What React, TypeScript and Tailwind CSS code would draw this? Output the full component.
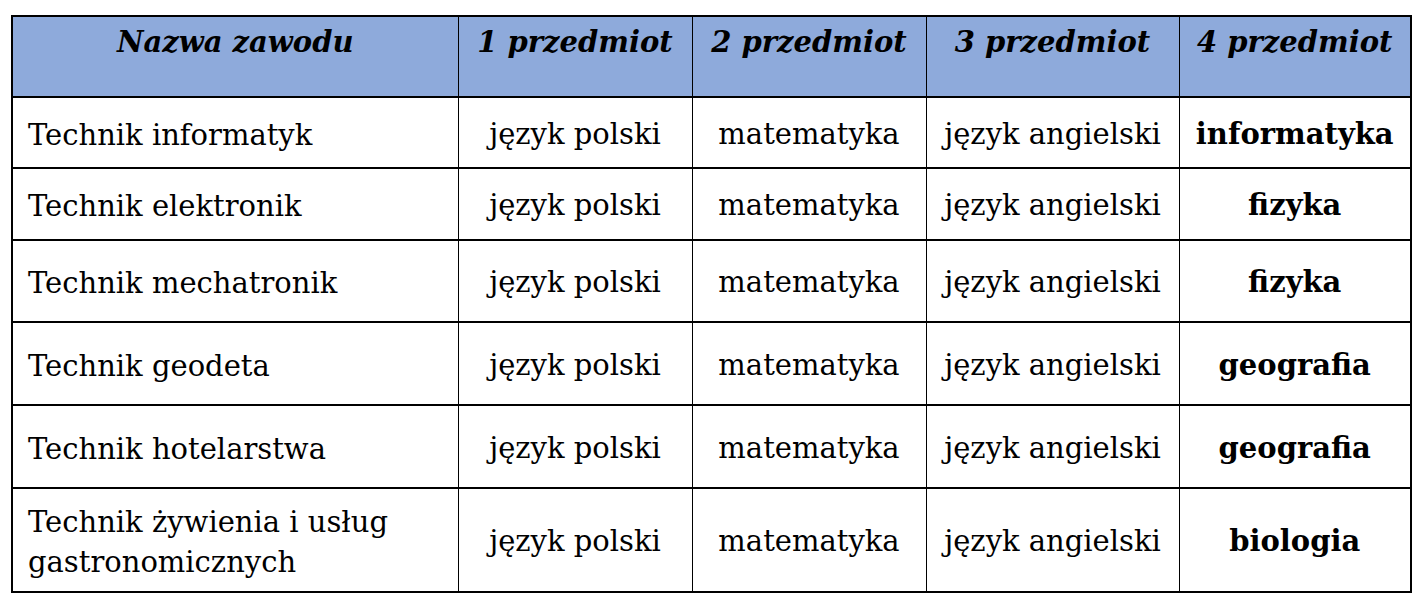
import React from 'react';

const ROWS = [
  { name: 'Technik informatyk', fourth: 'informatyka', h: 'h-[71px]' },
  { name: 'Technik elektronik', fourth: 'fizyka', h: 'h-[72px]' },
  { name: 'Technik mechatronik', fourth: 'fizyka', h: 'h-[82px]' },
  { name: 'Technik geodeta', fourth: 'geografia', h: 'h-[83px]' },
  { name: 'Technik hotelarstwa', fourth: 'geografia', h: 'h-[83px]' },
  { name: 'Technik żywienia i usług gastronomicznych', fourth: 'biologia', h: 'h-[104px]' },
];

const HEADERS = ['Nazwa zawodu', '1 przedmiot', '2 przedmiot', '3 przedmiot', '4 przedmiot'];

export default function App() {
  return (
    <div className="bg-white w-[1428px] h-[605px] pt-[15px] pl-[11px] text-black [font-family:'DejaVu_Serif',serif]">
      <table className="table-fixed border-collapse w-[1399px] text-[29px]">
        <colgroup>
          <col className="w-[446px]" />
          <col className="w-[234px]" />
          <col className="w-[234px]" />
          <col className="w-[253px]" />
          <col className="w-[232px]" />
        </colgroup>
        <thead>
          <tr className="h-[81px] bg-[#8eaadb] border-2 border-black">
            {HEADERS.map(h => (
              <th key={h} className="border-x border-black align-top pt-[8px] font-bold italic text-center leading-[34px]">{h}</th>
            ))}
          </tr>
        </thead>
        <tbody>
          {ROWS.map(r => (
            <tr key={r.name} className={`${r.h} border-y-2 border-x-2 border-black`}>
              <td className="border-x border-black pl-[15px] pr-4 pt-1 leading-[40px] text-left">{r.name}</td>
              <td className="border-x border-black text-center pt-1">język polski</td>
              <td className="border-x border-black text-center pt-1">matematyka</td>
              <td className="border-x border-black text-center pt-1">język angielski</td>
              <td className="border-x border-black text-center pt-1 font-bold">{r.fourth}</td>
            </tr>
          ))}
        </tbody>
      </table>
    </div>
  );
}
